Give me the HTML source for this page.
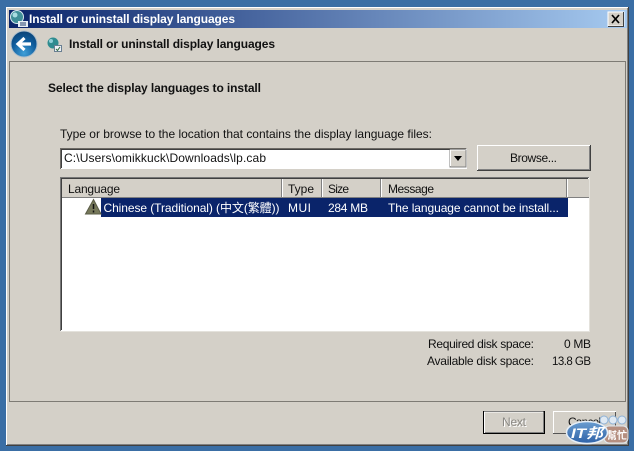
<!DOCTYPE html>
<html><head><meta charset="utf-8"><style>
html,body{margin:0;padding:0;width:634px;height:451px;overflow:hidden;background:#3a6ea5}
svg{display:block}
text{font-family:"Liberation Sans","Noto Sans CJK TC",sans-serif;font-size:12px;fill:#111}
.b{font-weight:bold}
</style></head><body>
<svg width="634" height="451" viewBox="0 0 634 451" xmlns="http://www.w3.org/2000/svg">
<defs>
<linearGradient id="tb" x1="0" x2="1" y1="0" y2="0"><stop offset="0" stop-color="#0a246a"/><stop offset="1" stop-color="#a6caf0"/></linearGradient>
<radialGradient id="bk" cx=".5" cy=".85" r=".9"><stop offset="0" stop-color="#3f9fd8"/><stop offset=".55" stop-color="#0f5c9c"/><stop offset="1" stop-color="#0a3f70"/></radialGradient>
<linearGradient id="lg" x1="0" x2="0" y1="0" y2="1"><stop offset="0" stop-color="#6a9dd0"/><stop offset="1" stop-color="#2f62a8"/></linearGradient>
</defs>
<rect width="634" height="451" fill="#3a6ea5"/>
<!-- window -->
<rect x="6" y="7" width="623" height="439" fill="#404040"/>
<rect x="6" y="7" width="622" height="438" fill="#fff"/>
<rect x="7" y="8" width="621" height="437" fill="#808080"/>
<rect x="7" y="8" width="620" height="436" fill="#d4d0c8"/>
<rect x="9" y="10" width="618" height="18" fill="url(#tb)"/>
<!-- title icon -->
<circle cx="17" cy="17" r="6.500" fill="#3f8f98" stroke="#d6e8ee"/>
<circle cx="15" cy="15" r="2.500" fill="#a8dce0"/>
<rect x="18" y="21" width="10" height="6" fill="#e8eef4"/>
<path d="M20 23h6M20 25h6" stroke="#24406e"/>
<text x="29" y="23" class="b" style="fill:#fff" textLength="206" lengthAdjust="spacing">Install or uninstall display languages</text>
<!-- close -->
<rect x="608" y="12" width="16" height="14" fill="#d4d0c8" stroke="#fff"/>
<path d="M623.500 12v14.500H608" fill="none" stroke="#404040"/>
<path d="M612 15l7 8M619 15l-7 8" stroke="#000" stroke-width="1.700"/>
<!-- back -->
<circle cx="24" cy="44" r="13" fill="url(#bk)" stroke="#a9bccb"/>
<path d="M31 44H19M24.500 38L18 44l6.500 6" fill="none" stroke="#fff" stroke-width="3.200"/>
<!-- header icon -->
<circle cx="53" cy="43" r="5.500" fill="#2f8c90"/>
<circle cx="51" cy="41" r="2" fill="#8fd0d8"/>
<rect x="54.500" y="45.500" width="7" height="6" fill="#eef2f6" stroke="#6a7f92"/>
<path d="M56 49l1.500 1.500L60 47" fill="none" stroke="#2f6b40"/>
<text x="69" y="48" class="b" textLength="206" lengthAdjust="spacing">Install or uninstall display languages</text>
<!-- panel -->
<rect x="9.500" y="61.500" width="616" height="340" fill="#d4d0c8" stroke="#7e7b75"/>
<text x="48" y="92" class="b" textLength="213" lengthAdjust="spacing">Select the display languages to install</text>
<text x="60" y="138" textLength="372" lengthAdjust="spacing">Type or browse to the location that contains the display language files:</text>
<!-- combo -->
<rect x="60" y="148" width="407" height="21" fill="#fff"/>
<path d="M60.500 169V148.500H466.500" fill="none" stroke="#6e6b66"/>
<path d="M61.500 168V149.500H465.500" fill="none" stroke="#404040"/>
<text x="64" y="162" textLength="202" lengthAdjust="spacing">C:\Users\omikkuck\Downloads\lp.cab</text>
<rect x="450" y="150" width="16" height="17" fill="#d4d0c8" stroke="#808080"/>
<path d="M450.500 166v-16h15" fill="none" stroke="#fff"/>
<path d="M454 156h8l-4 5z" fill="#000"/>
<!-- browse -->
<rect x="477" y="145" width="114" height="26" fill="#d4d0c8"/>
<path d="M477.500 171V145.500H590" fill="none" stroke="#fff"/>
<path d="M590.500 145V170.500H477" fill="none" stroke="#404040"/>
<path d="M589.500 146V169.500H478" fill="none" stroke="#808080"/>
<text x="510" y="162" textLength="47" lengthAdjust="spacing">Browse...</text>
<!-- list -->
<rect x="60" y="177" width="530" height="154" fill="#fff"/>
<path d="M60.500 331V177.500H589" fill="none" stroke="#777"/>
<path d="M61.500 330V178.500H588" fill="none" stroke="#404040"/>
<path d="M589.500 177V331.500H60" fill="none" stroke="#e4e2dc"/>
<rect x="62" y="179" width="527" height="18" fill="#d4d0c8"/>
<path d="M62 197.500H589" stroke="#808080"/>
<path d="M281.500 179v18M321.500 179v18M380.500 179v18M566.500 179v18" stroke="#808080"/>
<path d="M282.500 179v18M322.500 179v18M381.500 179v18M567.500 179v18" stroke="#fff"/>
<text x="68" y="193" textLength="52" lengthAdjust="spacing">Language</text>
<text x="288" y="193" textLength="26" lengthAdjust="spacing">Type</text>
<text x="328" y="193" textLength="21" lengthAdjust="spacing">Size</text>
<text x="388" y="193" textLength="46" lengthAdjust="spacing">Message</text>
<!-- row -->
<rect x="101" y="198" width="467" height="19" fill="#0a246a"/>
<path d="M93.500 199.500L101 214H85.500z" fill="#76785a" stroke="#5a5c46"/>
<path d="M93.500 204v5M93.500 210.500v2" stroke="#111" stroke-width="1.500"/>
<text x="103.500" y="212" style="fill:#fff" textLength="176" lengthAdjust="spacing">Chinese (Traditional) (中文(繁體))</text>
<text x="288" y="212" style="fill:#fff" textLength="23" lengthAdjust="spacing">MUI</text>
<text x="328" y="212" style="fill:#fff" textLength="40" lengthAdjust="spacing">284 MB</text>
<text x="388" y="212" style="fill:#fff" textLength="171" lengthAdjust="spacing">The language cannot be install...</text>
<!-- disk -->
<text x="428" y="348" textLength="106" lengthAdjust="spacing">Required disk space:</text>
<text x="427" y="365" textLength="107" lengthAdjust="spacing">Available disk space:</text>
<text x="564" y="348" textLength="27" lengthAdjust="spacing">0 MB</text>
<text x="552" y="365" style="font-size:11.500px" textLength="39" lengthAdjust="spacing">13.8 GB</text>
<!-- next -->
<rect x="483.500" y="411.500" width="61" height="22" fill="#d4d0c8" stroke="#000"/>
<path d="M484.500 433v-21h59" fill="none" stroke="#fff"/>
<path d="M543.500 412v20.500H485" fill="none" stroke="#808080"/>
<text x="503" y="427" style="fill:#fff" textLength="24" lengthAdjust="spacing">Next</text>
<text x="502" y="426" style="fill:#8a8883" textLength="24" lengthAdjust="spacing">Next</text>
<!-- cancel -->
<path d="M553.500 433V411.500H616" fill="none" stroke="#fff"/>
<path d="M615.500 412v21.500H553" fill="none" stroke="#555"/>
<text x="568" y="426" textLength="33" lengthAdjust="spacing">Cancel</text>
<!-- watermark -->
<circle cx="604" cy="420" r="4" fill="#dfe9f3" stroke="#8fb2d6"/>
<circle cx="613" cy="420" r="4" fill="#dfe9f3" stroke="#8fb2d6"/>
<circle cx="622" cy="420" r="4" fill="#dfe9f3" stroke="#8fb2d6"/>
<rect x="604" y="426" width="24" height="17" rx="5" fill="#b58f80" stroke="#dfe8ef"/>
<text x="607" y="439" class="b" style="fill:#fff;font-size:10px" textLength="20" lengthAdjust="spacingAndGlyphs">幫忙</text>
<ellipse cx="587" cy="432.500" rx="20.500" ry="11" fill="url(#lg)" stroke="#e6eef6" stroke-width="1.500"/>
<text x="571" y="438" class="b" style="fill:#fff;font-size:14px;font-style:italic" textLength="32" lengthAdjust="spacingAndGlyphs">IT邦</text>
</svg>
</body></html>
